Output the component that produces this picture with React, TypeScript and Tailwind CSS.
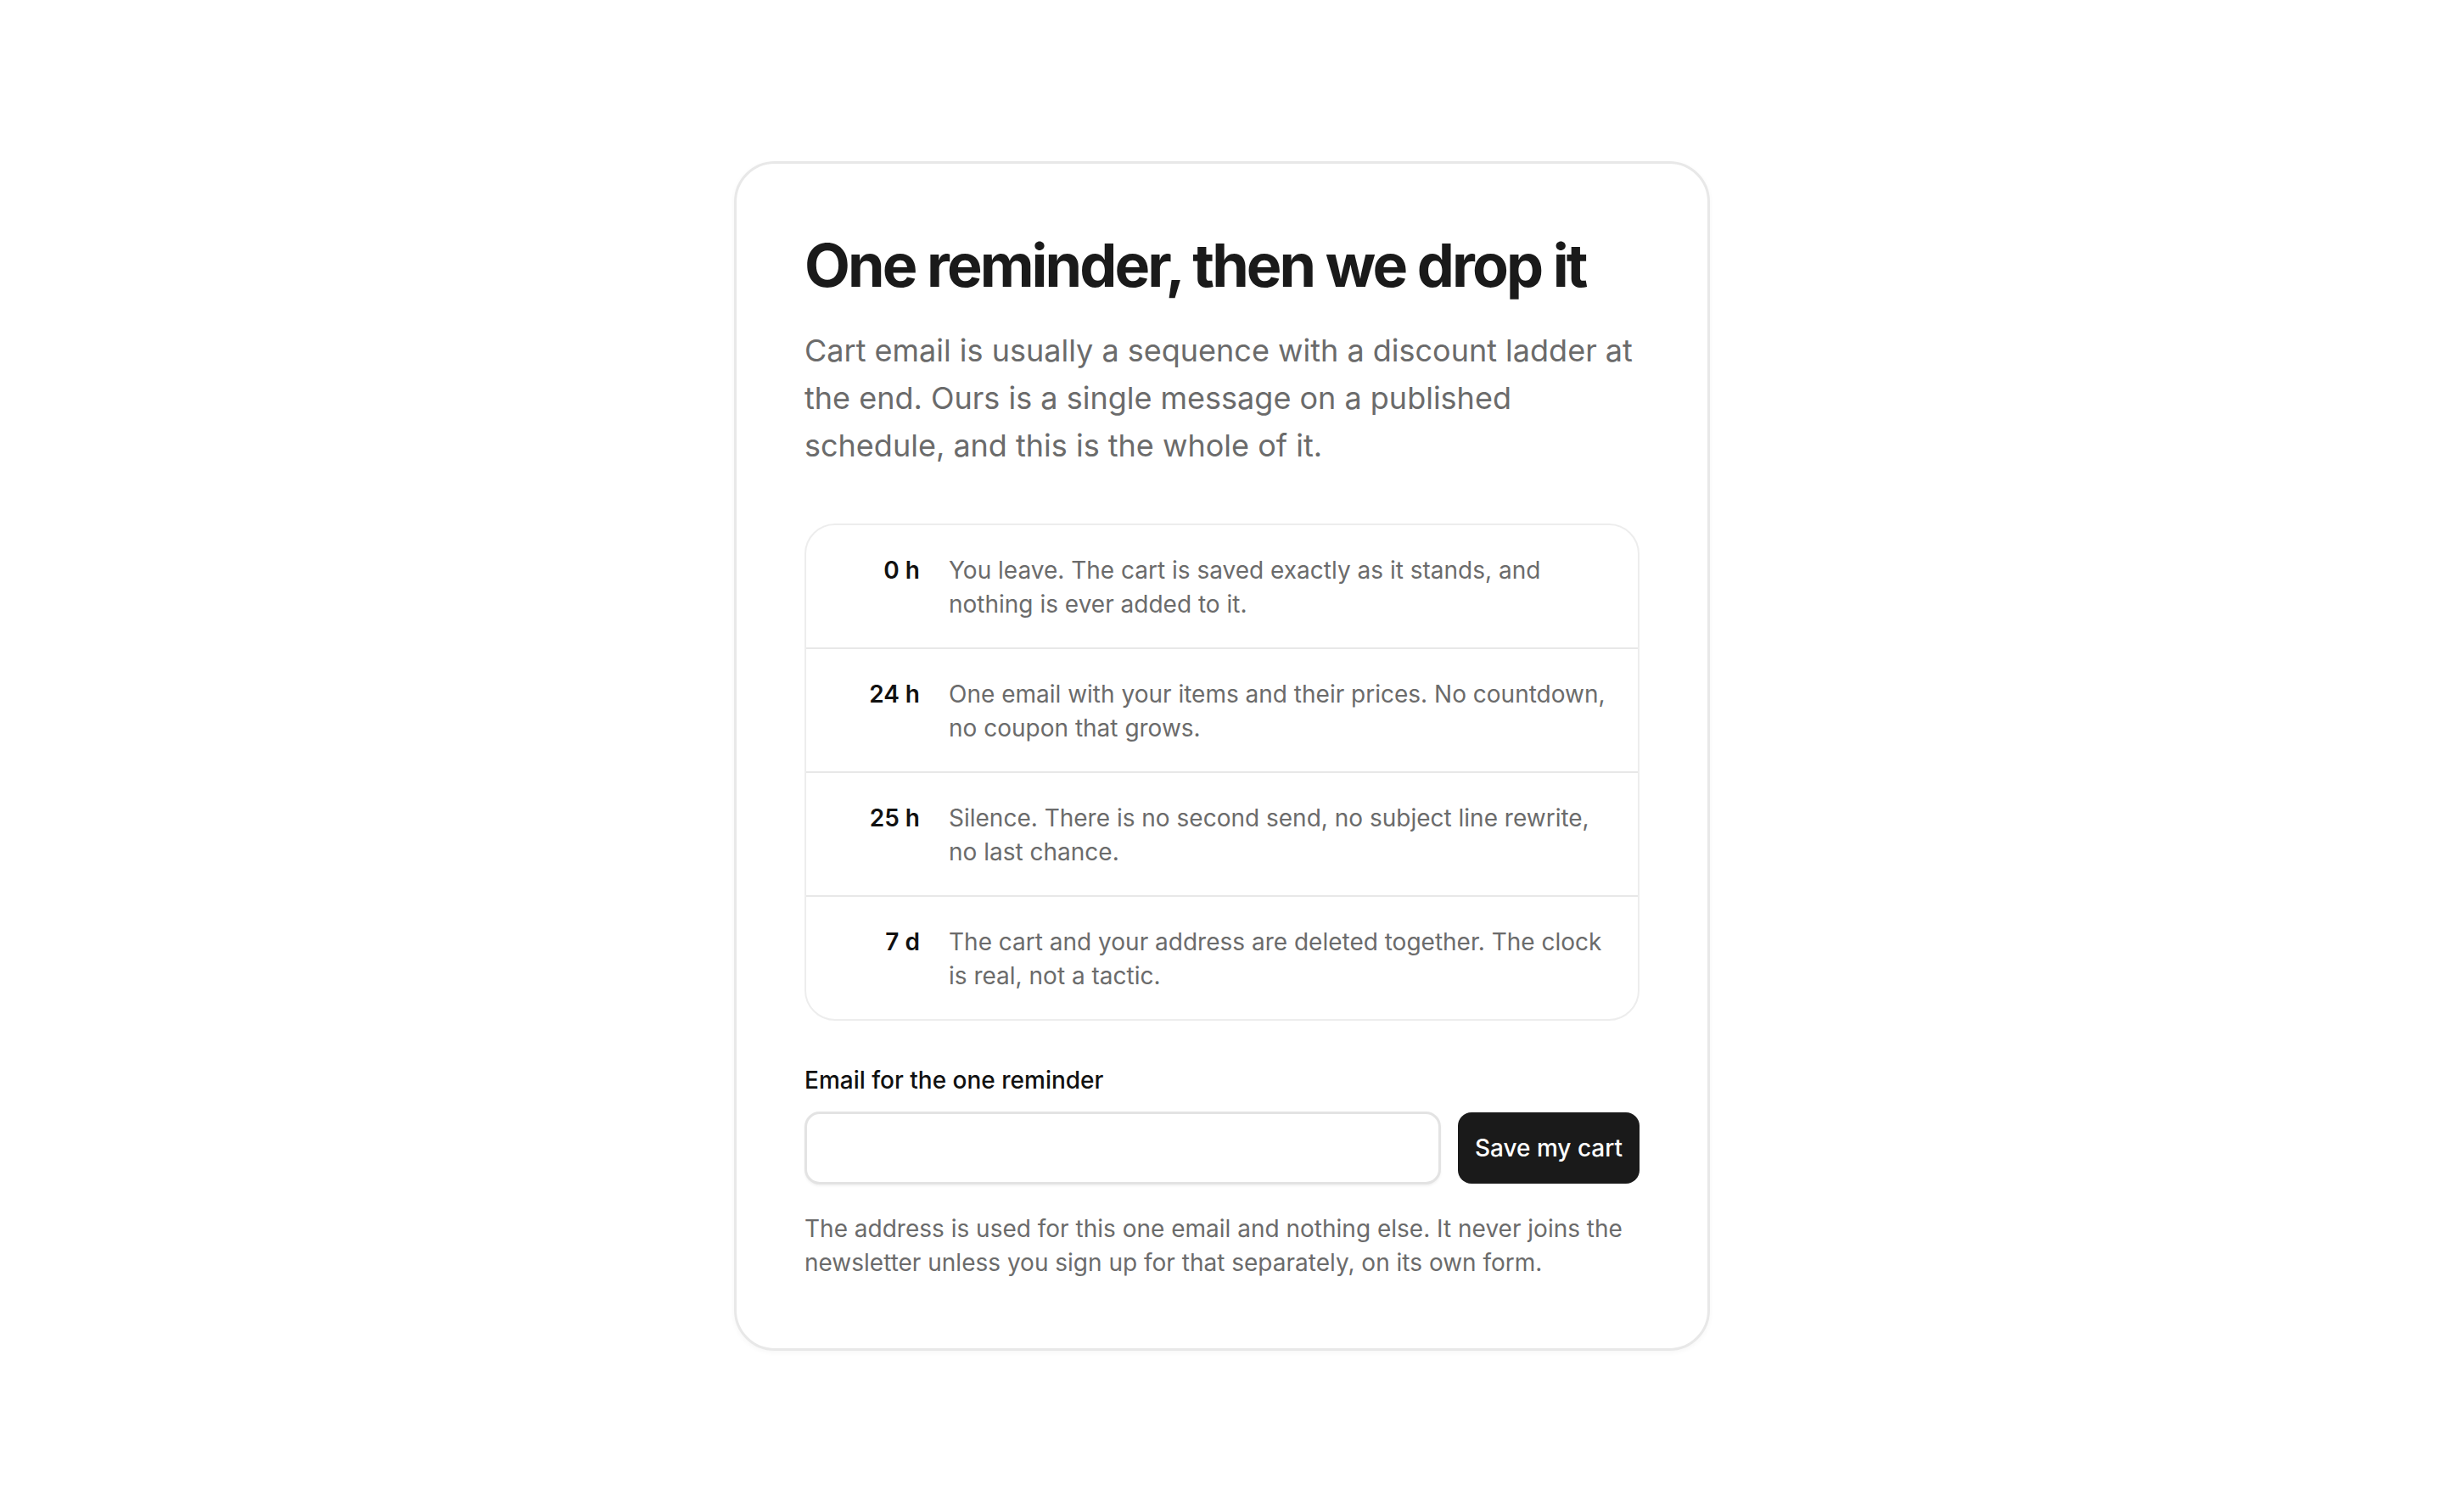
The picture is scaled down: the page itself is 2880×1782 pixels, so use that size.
import React from "react";

const steps = [
  { at: "0 h", text: "You leave. The cart is saved exactly as it stands, and nothing is ever added to it." },
  { at: "24 h", text: "One email with your items and their prices. No countdown, no coupon that grows." },
  { at: "25 h", text: "Silence. There is no second send, no subject line rewrite, no last chance." },
  { at: "7 d", text: "The cart and your address are deleted together. The clock is real, not a tactic." },
];

export default function App() {
  return (
    <div
      className="min-h-screen w-full bg-white flex items-center justify-center"
      style={{ fontFamily: "Inter, 'Noto Sans', sans-serif" }}
    >
      <div className="w-[1150px] rounded-[48px] border-[3px] border-[#e8e8e8] bg-white px-[80px] pt-[82px] pb-[81px] shadow-[0_2px_6px_rgba(0,0,0,0.04)]">
        <h1 className="text-[70px] leading-[75px] font-bold tracking-[-0.042em] text-[#1a1a1a]">
          One reminder, then we drop it
        </h1>
        <p className="mt-[35px] text-[36px] leading-[56px] text-[#6b6b6b]">
          Cart email is usually a sequence with a discount ladder at the end. Ours is a single message on a
          published schedule, and this is the whole of it.
        </p>

        <div className="mt-[64px] rounded-[36px] border-2 border-[#ededed] overflow-hidden">
          {steps.map((s, i) => (
            <div
              key={s.at}
              className={
                "flex items-start pl-[36px] pr-[20px] pt-[33px] pb-[31px] " +
                (i > 0 ? "border-t-2 border-[#e8e8e8]" : "")
              }
            >
              <div className="w-[98px] shrink-0 text-right text-[28px] leading-[40px] font-semibold text-[#111]">
                {s.at}
              </div>
              <div className="ml-[34px] text-[28px] leading-[40px] text-[#6b6b6b]">{s.text}</div>
            </div>
          ))}
        </div>

        <label className="mt-[50px] block text-[28px] leading-[40px] font-medium text-[#111]">
          Email for the one reminder
        </label>
        <div className="mt-[17px] flex items-center gap-[20px]">
          <input
            type="email"
            className="h-[86px] flex-1 rounded-[18px] border-[3px] border-[#e3e3e3] bg-white px-[24px] text-[28px] outline-none shadow-[0_2px_3px_rgba(0,0,0,0.05)]"
          />
          <button className="h-[84px] w-[214px] rounded-[16px] bg-[#1a1a1a] text-[28px] font-medium text-white">
            Save my cart
          </button>
        </div>

        <p className="mt-[32px] text-[28px] leading-[40px] text-[#6b6b6b]">
          The address is used for this one email and nothing else. It never joins the newsletter unless you sign
          up for that separately, on its own form.
        </p>
      </div>
    </div>
  );
}
